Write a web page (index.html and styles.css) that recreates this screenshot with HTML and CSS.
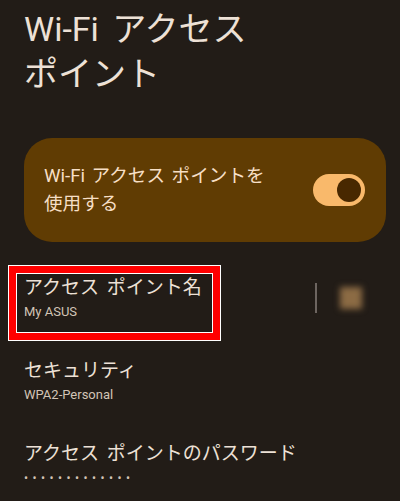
FILE: index.html
```html
<!DOCTYPE html>
<html lang="ja">
<head>
<meta charset="utf-8">
<link rel="stylesheet" href="styles.css">
</head>
<body>
<div class="screen">
  <h1 class="title">Wi-Fi アクセス ポイント</h1>
  <div class="card">
    <span class="card-label">Wi-Fi アクセス ポイントを使用する</span>
    <span class="switch"><span class="thumb"></span></span>
  </div>
  <div class="list">
    <div class="row">
      <div class="texts highlighted">
        <div class="label">アクセス ポイント名</div>
        <div class="sub">My ASUS</div>
      </div>
      <div class="trail">
        <span class="divider"></span>
        <span class="blur-icon"></span>
      </div>
    </div>
    <div class="row">
      <div class="texts">
        <div class="label">セキュリティ</div>
        <div class="sub">WPA2-Personal</div>
      </div>
    </div>
    <div class="row">
      <div class="texts">
        <div class="label">アクセス ポイントのパスワード</div>
        <div class="sub dots">•••••••••••••</div>
      </div>
    </div>
  </div>
</div>
</body>
</html>
```

FILE: styles.css
```css
* { box-sizing: border-box; }
html, body {
  margin: 0;
  padding: 0;
  background: #221c17;
  height: 100%;
  overflow: hidden;
}
body {
  font-family: Roboto, "Noto Sans CJK JP", sans-serif;
  color: #ede1d6;
}
.screen {
  padding: 7px 14px 0 24px;
}
.title {
  margin: 0;
  font-size: 34px;
  font-weight: 400;
  line-height: 45px;
  color: #ede1d6;
  word-break: keep-all;
  word-spacing: 5px;
}
.card {
  margin-top: 41px;
  height: 104px;
  background: #603c03;
  border-radius: 28px;
  padding: 0 20px;
  display: flex;
  align-items: center;
  justify-content: space-between;
}
.card-label {
  max-width: 234px;
  font-size: 18.6px;
  line-height: 28px;
  word-spacing: 2px;
  color: #f6dfc6;
}
.switch {
  width: 52px;
  height: 32px;
  border-radius: 16px;
  background: #f9b96b;
  display: flex;
  align-items: center;
  justify-content: flex-end;
  padding-right: 4px;
  margin-right: 1px;
}
.thumb {
  width: 24px;
  height: 24px;
  border-radius: 50%;
  background: #482800;
}
.list {
  margin-top: 14px;
}
.row {
  display: flex;
  align-items: center;
  justify-content: space-between;
  padding: 18px 0 17px;
}
.texts {
  position: relative;
}
.label {
  font-size: 19px;
  line-height: 28px;
  word-spacing: 3px;
  color: #ede1d6;
}
.sub {
  font-size: 13px;
  line-height: 20px;
  color: #d2c4b6;
}
.dots {
  letter-spacing: 4.45px;
  font-size: 12px;
}
.highlighted::after {
  content: "";
  position: absolute;
  top: -8px;
  left: -15px;
  right: -18px;
  bottom: -18px;
  border: 7px solid #ff0000;
  outline: 1px solid #ffffff;
  box-shadow: inset 0 0 0 1px #ffffff;
}
.trail {
  display: flex;
  align-items: center;
  gap: 23px;
  padding-right: 24px;
}
.divider {
  width: 2px;
  height: 30px;
  background: #6d6560;
}
.blur-icon {
  width: 22px;
  height: 22px;
  background: #8c6b44;
  filter: blur(3px);
}
```
